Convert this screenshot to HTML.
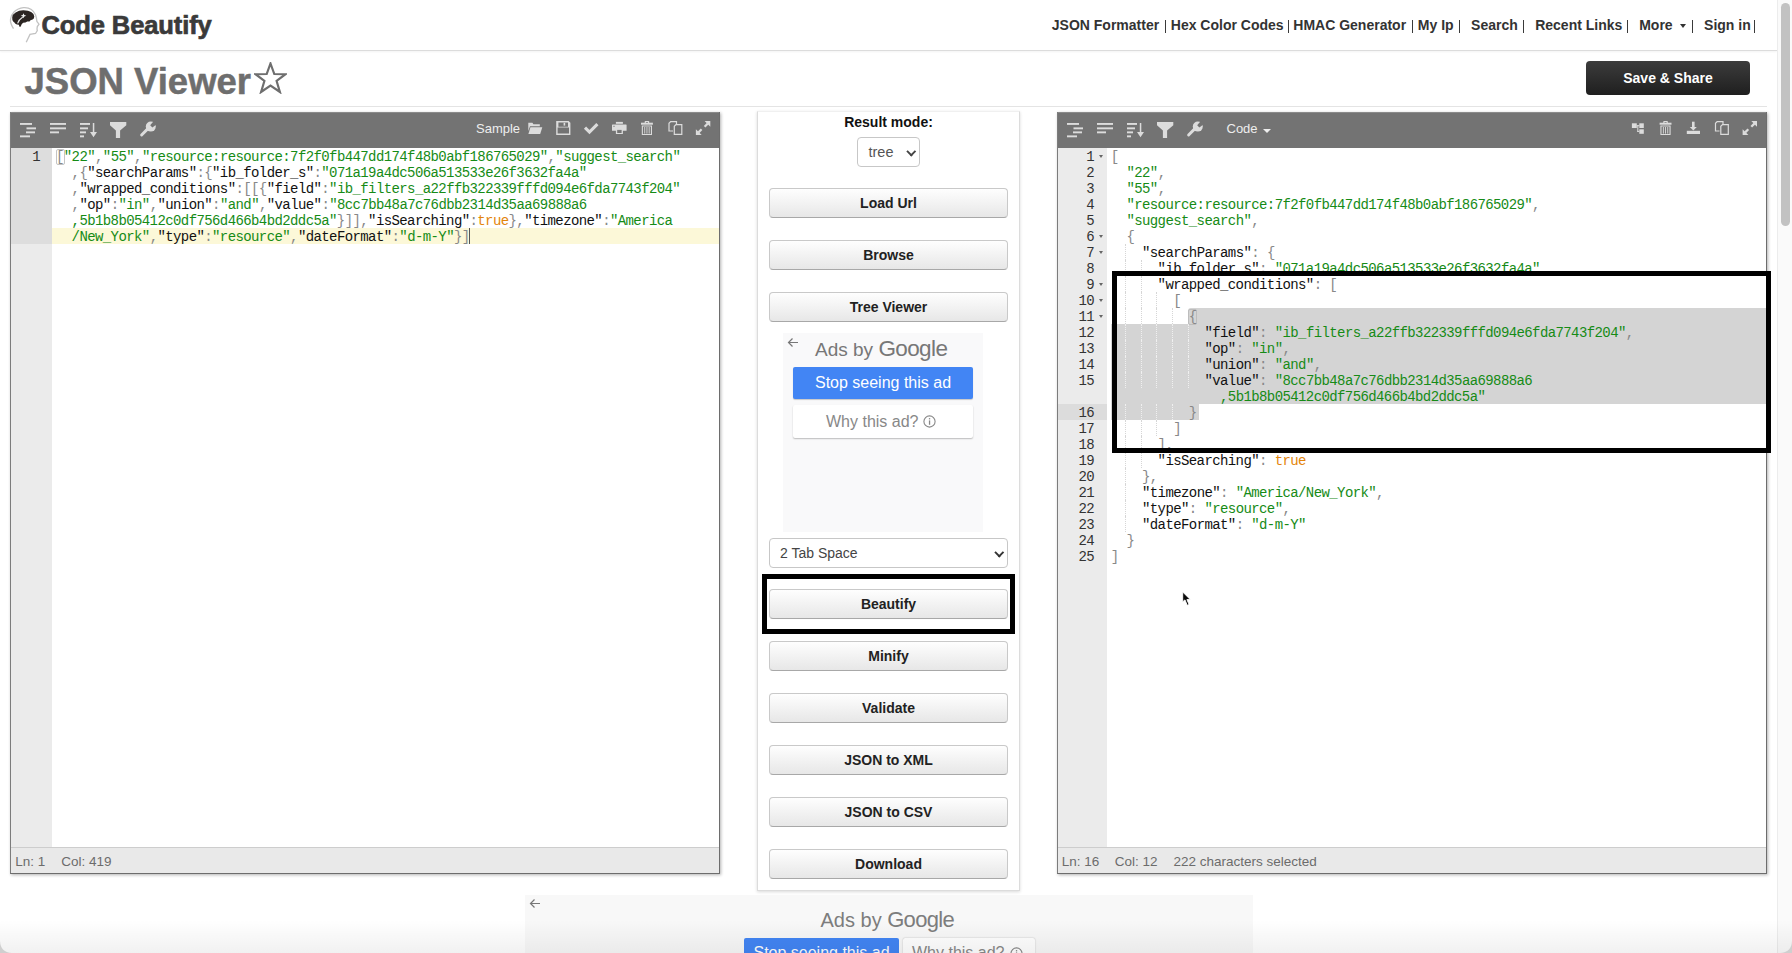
<!DOCTYPE html><html><head><meta charset="utf-8"><style>
*{box-sizing:border-box;margin:0;padding:0}
html,body{width:1792px;height:953px;overflow:hidden;background:#fff;font-family:"Liberation Sans",sans-serif}
.abs{position:absolute}
#hdr{position:absolute;left:0;top:0;width:1777px;height:51px;border-bottom:1px solid #dcdcdc;box-shadow:0 1px 2px rgba(0,0,0,.05)}
#logo-t{position:absolute;left:41.5px;top:10.5px;font-size:25.5px;font-weight:bold;color:#3a3a3a;letter-spacing:-0.1px;-webkit-text-stroke:0.7px #3a3a3a}
.nv{position:absolute;top:17px;font-size:14px;font-weight:bold;color:#333;white-space:nowrap}
.pp{position:absolute;top:19.5px;width:1.3px;height:13px;background:#3a3a3a}
#title{position:absolute;left:24.5px;top:61px;font-size:36.5px;font-weight:bold;color:#6e6e6e;-webkit-text-stroke:0.5px #6e6e6e;letter-spacing:0px}
#hr{position:absolute;left:10px;top:106px;width:1757px;height:1px;background:#e4e4e4}
#save{position:absolute;left:1586px;top:61px;width:164px;height:34px;border-radius:4px;background:linear-gradient(#3c3c3c,#1f1f1f);color:#fff;font-size:14px;font-weight:bold;text-align:center;line-height:34px}
.ed{position:absolute;top:112px;width:710px;height:762px;border:1px solid #6d6d6d;border-top:none;border-left-color:#7c7c7c;box-shadow:1px 1px 3px rgba(0,0,0,.3);background:#fff;overflow:hidden}
.tb{position:absolute;left:0;top:0;right:0;height:36px;background:#737373;border-top:1px solid #8a8a8a}
.gut{position:absolute;left:0;top:36px;bottom:26px;background:#ebebeb}
.gnum{position:absolute;font-family:"Liberation Mono",monospace;font-size:14px;letter-spacing:-0.6px;line-height:16px;text-align:right;color:#333}
.fold{position:absolute;width:0;height:0;border-left:2.5px solid transparent;border-right:2.5px solid transparent;border-top:3px solid #666}
.ig{position:absolute;width:0;height:16px;border-left:1px dotted #dadada}
.stat{position:absolute;left:0;right:0;bottom:0;height:26px;background:#e9e9e9;border-top:1px solid #cdcdcd}
.st{position:absolute;top:5.6px;font-size:13.5px;color:#6c6c6c;white-space:nowrap}
.code{position:absolute;font-family:"Liberation Mono",monospace;font-size:14px;letter-spacing:-0.6px;line-height:16px;white-space:pre;color:#000}
.k{color:#111}
.s{color:#168b16}
.p{color:#888}
.b{color:#e3850b}
.ic{position:absolute;fill:#dcdcdc;color:#dcdcdc;overflow:visible}
.tbt{position:absolute;top:120.5px;font-size:13px;color:#eee}
#mid{position:absolute;left:757px;top:111px;width:263px;height:780px;border:1px solid #dcdcdc;border-top-color:#f0f0f0;box-shadow:0 1px 3px rgba(0,0,0,.15);background:#fff}
.btn{position:absolute;left:769px;width:239px;height:29.5px;border:1px solid #c9c9c9;border-bottom-color:#a8a8a8;border-radius:4px;background:linear-gradient(#fefefe,#e7e7e7);font-size:14px;font-weight:bold;color:#222;text-align:center;line-height:29.5px}
.sel{position:absolute;border:1px solid #c7c7c7;border-radius:4px;background:#fff;font-size:15px;color:#333}
.chev{position:absolute;width:7px;height:7px;border-right:2px solid #333;border-bottom:2px solid #333;transform:rotate(45deg)}
.hl{position:absolute;border:5px solid #000}
</style></head><body>
<div id="hdr">
<svg class="abs" style="left:0;top:0" width="45" height="48" viewBox="0 0 45 48"><path d="M13.5 28.6 C11.5 25.5 10.2 22.5 10.5 19.5 C11 14 15.5 8.5 23.5 7.6 C29 7.2 33.5 10 35.6 15 C36.5 17.5 36.7 19.5 36.9 21.5 L39 24.2 L37.3 26.6 L37 28.9 L37.3 30.7 L35.5 33.5 L30 34.4 L26.2 42.3" fill="none" stroke="#c2c2c2" stroke-width="1.3"/><path d="M12.2 17.5 Q12.6 14.2 15.6 12.6 Q19 10.2 23.5 10.3 Q28.5 10.4 31.2 12 Q34.2 13.8 34.3 16.4 Q34.2 18.6 32.6 19.6 L30.5 20.2 L29.5 21.4 L27.2 21.6 L25.5 22.6 L23.2 22.8 L21.8 24 L20.8 26.2 Q20.1 27.4 19.4 26.5 L18.8 24.8 L17 24.6 L15.4 23.8 L14.4 22.4 L13.2 21.6 Q12 20 12.2 17.5 Z" fill="#2b2422"/><path d="M23.5 13.3 L24.3 15 L26.3 15.7 L24.3 16.4 L23.5 18.2 L22.7 16.4 L20.7 15.7 L22.7 15 Z" fill="#f2f2f2"/><path d="M22.8 17 C20.5 18.5 18.5 20.5 17.6 23.4" fill="none" stroke="#e6e6e6" stroke-width="1.1"/></svg>
<div id="logo-t">Code Beautify</div>
<div class="nv" style="left:1051.8px">JSON Formatter</div>
<div class="nv" style="left:1170.8px">Hex Color Codes</div>
<div class="nv" style="left:1293.3px">HMAC Generator</div>
<div class="nv" style="left:1417.8px">My Ip</div>
<div class="nv" style="left:1471.1px">Search</div>
<div class="nv" style="left:1535.2px">Recent Links</div>
<div class="nv" style="left:1639.2px">More</div>
<div class="nv" style="left:1704.1px">Sign in</div>
<div class="pp" style="left:1165.0px"></div>
<div class="pp" style="left:1288.1px"></div>
<div class="pp" style="left:1412.0px"></div>
<div class="pp" style="left:1458.7px"></div>
<div class="pp" style="left:1522.6px"></div>
<div class="pp" style="left:1626.6px"></div>
<div class="pp" style="left:1691.9px"></div>
<div class="pp" style="left:1753.9px"></div>
<div class="abs" style="left:1680.4px;top:24px;width:0;height:0;border-left:3.8px solid transparent;border-right:3.8px solid transparent;border-top:4px solid #333"></div>
</div>
<div id="title">JSON Viewer</div>
<svg class="abs" style="left:254px;top:62px" width="33" height="32" viewBox="0 0 33 32"><polygon points="16.5,1.5 20.3,12 31.5,12.2 22.6,19 25.9,30 16.5,23.6 7.1,30 10.4,19 1.5,12.2 12.7,12" fill="none" stroke="#6e6e6e" stroke-width="2.2" stroke-linejoin="miter"/></svg>
<div id="save">Save &amp; Share</div>
<div id="hr"></div>
<div class="ed" style="left:10px">
<div class="tb"></div>
<div class="gut" style="width:41px"></div>
<div class="abs" style="left:41px;top:116px;width:668px;height:16px;background:#fcf8d8"></div>
<div class="abs" style="left:0;top:36px;width:41px;height:96px;background:#dddddd"></div>
<div class="gnum" style="left:0;top:37px;width:29px">1</div>
<div class="code" style="left:45px;top:37px"><span class="p">[</span><span class="s">"22"</span><span class="p">,</span><span class="s">"55"</span><span class="p">,</span><span class="s">"resource:resource:7f2f0fb447dd174f48b0abf186765029"</span><span class="p">,</span><span class="s">"suggest_search"</span>
  <span class="p">,{</span><span class="k">"searchParams"</span><span class="p">:{</span><span class="k">"ib_folder_s"</span><span class="p">:</span><span class="s">"071a19a4dc506a513533e26f3632fa4a"</span>
  <span class="p">,</span><span class="k">"wrapped_conditions"</span><span class="p">:[[{</span><span class="k">"field"</span><span class="p">:</span><span class="s">"ib_filters_a22ffb322339fffd094e6fda7743f204"</span>
  <span class="p">,</span><span class="k">"op"</span><span class="p">:</span><span class="s">"in"</span><span class="p">,</span><span class="k">"union"</span><span class="p">:</span><span class="s">"and"</span><span class="p">,</span><span class="k">"value"</span><span class="p">:</span><span class="s">"8cc7bb48a7c76dbb2314d35aa69888a6</span>
  <span class="s">,5b1b8b05412c0df756d466b4bd2ddc5a"</span><span class="p">}]],</span><span class="k">"isSearching"</span><span class="p">:</span><span class="b">true</span><span class="p">},</span><span class="k">"timezone"</span><span class="p">:</span><span class="s">"America</span>
  <span class="s">/New_York"</span><span class="p">,</span><span class="k">"type"</span><span class="p">:</span><span class="s">"resource"</span><span class="p">,</span><span class="k">"dateFormat"</span><span class="p">:</span><span class="s">"d-m-Y"</span><span class="p">}]</span></div>
<div class="abs" style="left:44.6px;top:36.5px;width:9px;height:16px;border:1px solid #c4c4c4;border-radius:2px"></div>
<div class="abs" style="left:458.4px;top:116px;width:1px;height:16px;background:#555"></div>
<div class="stat"><span class="st" style="left:4.2px">Ln: 1</span><span class="st" style="left:50.3px">Col: 419</span></div>
</div>
<div class="ed" style="left:1057px">
<div class="tb"></div>
<div class="gut" style="width:49px"></div>
<div class="abs" style="left:0;top:292px;width:49px;height:16px;background:#dcdcdc"></div>
<div class="abs" style="left:129.8px;top:196px;right:0;height:16px;background:#d4d4d4;border-radius:3px 0 0 0"></div>
<div class="abs" style="left:52.8px;top:212px;right:0;height:80px;background:#d4d4d4"></div>
<div class="abs" style="left:52.8px;top:292px;width:87.8px;height:16px;background:#d4d4d4;border-radius:0"></div>
<div class="ig" style="left:67.2px;top:132px;border-left-color:#d6d6d6"></div><div class="ig" style="left:67.2px;top:148px;border-left-color:#d6d6d6"></div><div class="ig" style="left:82.8px;top:148px;border-left-color:#d6d6d6"></div><div class="ig" style="left:67.2px;top:164px;border-left-color:#d6d6d6"></div><div class="ig" style="left:82.8px;top:164px;border-left-color:#d6d6d6"></div><div class="ig" style="left:67.2px;top:180px;border-left-color:#d6d6d6"></div><div class="ig" style="left:82.8px;top:180px;border-left-color:#d6d6d6"></div><div class="ig" style="left:98.4px;top:180px;border-left-color:#d6d6d6"></div><div class="ig" style="left:67.2px;top:196px;border-left-color:#d6d6d6"></div><div class="ig" style="left:82.8px;top:196px;border-left-color:#d6d6d6"></div><div class="ig" style="left:98.4px;top:196px;border-left-color:#d6d6d6"></div><div class="ig" style="left:114.0px;top:196px;border-left-color:#d6d6d6"></div><div class="ig" style="left:67.2px;top:212px;border-left-color:#f0f0f0"></div><div class="ig" style="left:82.8px;top:212px;border-left-color:#f0f0f0"></div><div class="ig" style="left:98.4px;top:212px;border-left-color:#f0f0f0"></div><div class="ig" style="left:114.0px;top:212px;border-left-color:#f0f0f0"></div><div class="ig" style="left:129.6px;top:212px;border-left-color:#f0f0f0"></div><div class="ig" style="left:67.2px;top:228px;border-left-color:#f0f0f0"></div><div class="ig" style="left:82.8px;top:228px;border-left-color:#f0f0f0"></div><div class="ig" style="left:98.4px;top:228px;border-left-color:#f0f0f0"></div><div class="ig" style="left:114.0px;top:228px;border-left-color:#f0f0f0"></div><div class="ig" style="left:129.6px;top:228px;border-left-color:#f0f0f0"></div><div class="ig" style="left:67.2px;top:244px;border-left-color:#f0f0f0"></div><div class="ig" style="left:82.8px;top:244px;border-left-color:#f0f0f0"></div><div class="ig" style="left:98.4px;top:244px;border-left-color:#f0f0f0"></div><div class="ig" style="left:114.0px;top:244px;border-left-color:#f0f0f0"></div><div class="ig" style="left:129.6px;top:244px;border-left-color:#f0f0f0"></div><div class="ig" style="left:67.2px;top:260px;border-left-color:#f0f0f0"></div><div class="ig" style="left:82.8px;top:260px;border-left-color:#f0f0f0"></div><div class="ig" style="left:98.4px;top:260px;border-left-color:#f0f0f0"></div><div class="ig" style="left:114.0px;top:260px;border-left-color:#f0f0f0"></div><div class="ig" style="left:129.6px;top:260px;border-left-color:#f0f0f0"></div><div class="ig" style="left:67.2px;top:292px;border-left-color:#f0f0f0"></div><div class="ig" style="left:82.8px;top:292px;border-left-color:#f0f0f0"></div><div class="ig" style="left:98.4px;top:292px;border-left-color:#f0f0f0"></div><div class="ig" style="left:114.0px;top:292px;border-left-color:#f0f0f0"></div><div class="ig" style="left:67.2px;top:308px;border-left-color:#d6d6d6"></div><div class="ig" style="left:82.8px;top:308px;border-left-color:#d6d6d6"></div><div class="ig" style="left:98.4px;top:308px;border-left-color:#d6d6d6"></div><div class="ig" style="left:67.2px;top:324px;border-left-color:#d6d6d6"></div><div class="ig" style="left:82.8px;top:324px;border-left-color:#d6d6d6"></div><div class="ig" style="left:67.2px;top:340px;border-left-color:#d6d6d6"></div><div class="ig" style="left:82.8px;top:340px;border-left-color:#d6d6d6"></div><div class="ig" style="left:67.2px;top:356px;border-left-color:#d6d6d6"></div><div class="ig" style="left:67.2px;top:372px;border-left-color:#d6d6d6"></div><div class="ig" style="left:67.2px;top:388px;border-left-color:#d6d6d6"></div><div class="ig" style="left:67.2px;top:404px;border-left-color:#d6d6d6"></div>
<div class="abs" style="left:130.3px;top:196.5px;width:9px;height:16px;border:1px solid #bdbdbd;border-radius:2px"></div>
<div class="gnum" style="left:0;top:37px;width:36px">1</div><div class="fold" style="left:40.5px;top:43px"></div><div class="gnum" style="left:0;top:53px;width:36px">2</div><div class="gnum" style="left:0;top:69px;width:36px">3</div><div class="gnum" style="left:0;top:85px;width:36px">4</div><div class="gnum" style="left:0;top:101px;width:36px">5</div><div class="gnum" style="left:0;top:117px;width:36px">6</div><div class="fold" style="left:40.5px;top:123px"></div><div class="gnum" style="left:0;top:133px;width:36px">7</div><div class="fold" style="left:40.5px;top:139px"></div><div class="gnum" style="left:0;top:149px;width:36px">8</div><div class="gnum" style="left:0;top:165px;width:36px">9</div><div class="fold" style="left:40.5px;top:171px"></div><div class="gnum" style="left:0;top:181px;width:36px">10</div><div class="fold" style="left:40.5px;top:187px"></div><div class="gnum" style="left:0;top:197px;width:36px">11</div><div class="fold" style="left:40.5px;top:203px"></div><div class="gnum" style="left:0;top:213px;width:36px">12</div><div class="gnum" style="left:0;top:229px;width:36px">13</div><div class="gnum" style="left:0;top:245px;width:36px">14</div><div class="gnum" style="left:0;top:261px;width:36px">15</div><div class="gnum" style="left:0;top:293px;width:36px">16</div><div class="gnum" style="left:0;top:309px;width:36px">17</div><div class="gnum" style="left:0;top:325px;width:36px">18</div><div class="gnum" style="left:0;top:341px;width:36px">19</div><div class="gnum" style="left:0;top:357px;width:36px">20</div><div class="gnum" style="left:0;top:373px;width:36px">21</div><div class="gnum" style="left:0;top:389px;width:36px">22</div><div class="gnum" style="left:0;top:405px;width:36px">23</div><div class="gnum" style="left:0;top:421px;width:36px">24</div><div class="gnum" style="left:0;top:437px;width:36px">25</div>
<div class="code" style="left:52.8px;top:37px"><span class="p">[</span>
  <span class="s">"22"</span><span class="p">,</span>
  <span class="s">"55"</span><span class="p">,</span>
  <span class="s">"resource:resource:7f2f0fb447dd174f48b0abf186765029"</span><span class="p">,</span>
  <span class="s">"suggest_search"</span><span class="p">,</span>
  <span class="p">{</span>
    <span class="k">"searchParams"</span><span class="p">:</span> <span class="p">{</span>
      <span class="k">"ib_folder_s"</span><span class="p">:</span> <span class="s">"071a19a4dc506a513533e26f3632fa4a"</span><span class="p">,</span>
      <span class="k">"wrapped_conditions"</span><span class="p">:</span> <span class="p">[</span>
        <span class="p">[</span>
          <span class="p">{</span>
            <span class="k">"field"</span><span class="p">:</span> <span class="s">"ib_filters_a22ffb322339fffd094e6fda7743f204"</span><span class="p">,</span>
            <span class="k">"op"</span><span class="p">:</span> <span class="s">"in"</span><span class="p">,</span>
            <span class="k">"union"</span><span class="p">:</span> <span class="s">"and"</span><span class="p">,</span>
            <span class="k">"value"</span><span class="p">:</span> <span class="s">"8cc7bb48a7c76dbb2314d35aa69888a6</span>
              <span class="s">,5b1b8b05412c0df756d466b4bd2ddc5a"</span>
          <span class="p">}</span>
        <span class="p">]</span>
      <span class="p">],</span>
      <span class="k">"isSearching"</span><span class="p">:</span> <span class="b">true</span>
    <span class="p">},</span>
    <span class="k">"timezone"</span><span class="p">:</span> <span class="s">"America/New_York"</span><span class="p">,</span>
    <span class="k">"type"</span><span class="p">:</span> <span class="s">"resource"</span><span class="p">,</span>
    <span class="k">"dateFormat"</span><span class="p">:</span> <span class="s">"d-m-Y"</span>
  <span class="p">}</span>
<span class="p">]</span></div>
<div class="stat"><span class="st" style="left:3.8px">Ln: 16</span><span class="st" style="left:56.7px">Col: 12</span><span class="st" style="left:115.4px">222 characters selected</span></div>
</div>
<svg class="abs" style="left:0;top:0;overflow:visible" width="1792" height="160" viewBox="0 0 1792 160" fill="#dcdcdc"><rect x="20" y="123" width="12" height="1.9"/><rect x="26.5" y="127.4" width="9.5" height="1.9"/><rect x="26" y="131.4" width="9" height="1.9"/><rect x="20" y="135.4" width="10" height="1.9"/><rect x="50" y="123" width="16" height="1.9"/><rect x="50" y="127.4" width="16" height="1.9"/><rect x="50" y="131.4" width="9" height="1.9"/><rect x="80" y="123" width="10" height="1.9"/><rect x="80" y="127.4" width="8" height="1.9"/><rect x="80" y="131.4" width="6" height="1.9"/><rect x="80" y="135.4" width="4" height="1.9"/><rect x="92.8" y="123" width="1.5" height="10"/><polygon points="90,132 97,132 93.5,137.2"/><polygon points="110,122 126.3,122 126.3,125.2 120.1,130.4 120.1,137.9 115.9,137.9 115.9,130.4 110,125.2"/><path d="M141.6 135 L148.2 128.4" stroke="#dcdcdc" stroke-width="2.9" stroke-linecap="round" fill="none"/><circle cx="150.8" cy="126.6" r="5"/><path d="M150.2 125.2 L153.8 121.0 L157.4 123.8 L152.4 127.6 Z" fill="#737373"/><rect x="1067" y="123" width="12" height="1.9"/><rect x="1073.5" y="127.4" width="9.5" height="1.9"/><rect x="1073" y="131.4" width="9" height="1.9"/><rect x="1067" y="135.4" width="10" height="1.9"/><rect x="1097" y="123" width="16" height="1.9"/><rect x="1097" y="127.4" width="16" height="1.9"/><rect x="1097" y="131.4" width="9" height="1.9"/><rect x="1127" y="123" width="10" height="1.9"/><rect x="1127" y="127.4" width="8" height="1.9"/><rect x="1127" y="131.4" width="6" height="1.9"/><rect x="1127" y="135.4" width="4" height="1.9"/><rect x="1139.8" y="123" width="1.5" height="10"/><polygon points="1137,132 1144,132 1140.5,137.2"/><polygon points="1157,122 1173.3,122 1173.3,125.2 1167.1,130.4 1167.1,137.9 1162.9,137.9 1162.9,130.4 1157,125.2"/><path d="M1188.6 135 L1195.2 128.4" stroke="#dcdcdc" stroke-width="2.9" stroke-linecap="round" fill="none"/><circle cx="1197.8" cy="126.6" r="5"/><path d="M1197.2 125.2 L1200.8 121.0 L1204.4 123.8 L1199.4 127.6 Z" fill="#737373"/><polygon points="528.3,122.8 532.4,122.8 533.4,124.2 539.8,124.2 539.8,126.3 530,126.3 528.3,131"/><polygon points="530.4,127.3 542.3,127.3 540.2,134 528.4,134"/><path d="M556.2 121 H568.6 L570.4 122.8 V134.9 H556.2 Z M557.6 127.4 V133.5 H569 V127.4 Z" fill-rule="evenodd"/><path d="M558.4 122.4 V126.8 H568 V122.6 L567.4 122.4 Z" fill="#737373"/><rect x="563.6" y="122.8" width="1.6" height="2.8"/><path d="M585 127.6 L589.5 132.1 L597.4 124.2" stroke="#dcdcdc" stroke-width="3.1" fill="none" stroke-linejoin="miter"/><rect x="615.9" y="121.9" width="7" height="1.9"/><path d="M612.6 124.4 H626 Q626.6 124.4 626.6 125 V130.7 H612 V125 Q612 124.4 612.6 124.4 Z"/><path d="M615.9 128.9 H622.9 V134.1 H615.9 Z M617.2 129.9 V133 H621.6 V129.9 Z" fill-rule="evenodd"/><rect x="617.2" y="129.9" width="4.4" height="1" fill="#737373"/><rect x="613.4" y="125.8" width="1.2" height="1" fill="#737373"/><path d="M644.7 123 V121.6 Q644.7 121 645.3 121 H648.6 Q649.2 121 649.2 121.6 V123 H648 V122.1 H645.9 V123 Z"/><rect x="641" y="122.7" width="11.9" height="2"/><path d="M641.8 125.5 H652 V135 H641.8 Z M642.9 126.5 V134 H650.9 V126.5 Z" fill-rule="evenodd"/><rect x="644.3" y="127" width="0.9" height="6.6"/><rect x="646.5" y="127" width="0.9" height="6.6"/><rect x="648.7" y="127" width="0.9" height="6.6"/><path d="M1663.3000000000002 123 V121.6 Q1663.3000000000002 121 1663.9 121 H1667.2 Q1667.8000000000002 121 1667.8000000000002 121.6 V123 H1666.6 V122.1 H1664.5 V123 Z"/><rect x="1659.6" y="122.7" width="11.9" height="2"/><path d="M1660.4 125.5 H1670.6 V135 H1660.4 Z M1661.5 126.5 V134 H1669.5 V126.5 Z" fill-rule="evenodd"/><rect x="1662.9" y="127" width="0.9" height="6.6"/><rect x="1665.1" y="127" width="0.9" height="6.6"/><rect x="1667.3000000000002" y="127" width="0.9" height="6.6"/><path d="M668.4000000000001 123 L670.4000000000001 121 H677.0999999999999 V124.3 H675.9000000000001 V122.2 H670.9000000000001 L669.5999999999999 123.5 V130.4 H673.0 V131.6 H668.4000000000001 Z"/><path d="M673.7 126 L675.7 124 H682.4000000000001 V134.9 H673.7 Z M674.9000000000001 126.5 V133.7 H681.2 V125.2 H676.2 Z" fill-rule="evenodd"/><path d="M1714.9 123 L1716.9 121 H1723.6 V124.3 H1722.4 V122.2 H1717.4 L1716.1 123.5 V130.4 H1719.5 V131.6 H1714.9 Z"/><path d="M1720.2 126 L1722.2 124 H1728.9 V134.9 H1720.2 Z M1721.4 126.5 V133.7 H1727.7 V125.2 H1722.7 Z" fill-rule="evenodd"/><polygon points="704.5999999999999,121 710.3,121 710.3,126.7"/><path d="M707.7 123.6 L704.5999999999999 126.7" stroke="#dcdcdc" stroke-width="2.2" fill="none"/><polygon points="695.8999999999999,129.2 695.8999999999999,135 701.7,135"/><path d="M698.5 132.4 L701.5999999999999 129.3" stroke="#dcdcdc" stroke-width="2.2" fill="none"/><polygon points="1751.3,121 1757.0,121 1757.0,126.7"/><path d="M1754.4 123.6 L1751.3 126.7" stroke="#dcdcdc" stroke-width="2.2" fill="none"/><polygon points="1742.6,129.2 1742.6,135 1748.4,135"/><path d="M1745.2 132.4 L1748.3 129.3" stroke="#dcdcdc" stroke-width="2.2" fill="none"/><rect x="1631.9" y="123.3" width="4.9" height="4.7"/><rect x="1639.3" y="123.3" width="4.5" height="4.7"/><rect x="1639.3" y="129.3" width="4.5" height="4.5"/><rect x="1636.8" y="125.2" width="2.5" height="1"/><rect x="1637.3" y="125.2" width="1" height="6.7"/><rect x="1637.3" y="130.9" width="2" height="1"/><rect x="1692" y="121.7" width="2.6" height="5.8"/><polygon points="1689.8,127 1696.8,127 1693.3,130.6"/><rect x="1686.8" y="130.8" width="13.2" height="3.2"/></svg>
<div class="tbt" style="left:476px">Sample</div>
<div class="tbt" style="left:1226.5px">Code</div>
<div class="abs" style="left:1262.5px;top:128.5px;width:0;height:0;border-left:4px solid transparent;border-right:4px solid transparent;border-top:4.5px solid #eee"></div>
<div id="mid"></div>
<div class="abs" style="left:757px;top:114px;width:263px;text-align:center;font-size:14px;font-weight:bold;color:#111">Result mode:</div>
<div class="sel" style="left:857px;top:137px;width:63px;height:30px"><span class="abs" style="left:10.5px;top:5.5px;color:#555;font-size:14.5px">tree</span><div class="chev" style="left:50px;top:9.5px;width:6.5px;height:6.5px;border-width:0 2.2px 2.2px 0;border-color:#444"></div></div>
<div class="btn" style="top:188.3px">Load Url</div>
<div class="btn" style="top:240.3px">Browse</div>
<div class="btn" style="top:292.3px">Tree Viewer</div>
<div class="btn" style="top:589.2px">Beautify</div>
<div class="btn" style="top:641.2px">Minify</div>
<div class="btn" style="top:693.2px">Validate</div>
<div class="btn" style="top:745.2px">JSON to XML</div>
<div class="btn" style="top:797.2px">JSON to CSV</div>
<div class="btn" style="top:849.2px">Download</div>
<div class="abs" style="left:783px;top:333px;width:200px;height:199px;background:#f9f9fa"></div>
<svg class="abs" style="left:787px;top:337px" width="12" height="11" viewBox="0 0 12 11"><path d="M11 5.5 H1.5 M5.5 1.5 L1.5 5.5 L5.5 9.5" fill="none" stroke="#777" stroke-width="1.2"/></svg>
<div class="abs" style="left:815px;top:336px;font-size:19px;color:#777;white-space:nowrap">Ads by <span style="font-size:22.5px;letter-spacing:-0.6px">Google</span></div>
<div class="abs" style="left:793px;top:367px;width:180px;height:32px;background:#4285f4;border-radius:2px;box-shadow:0 1px 1px rgba(0,0,0,.2);color:#fff;font-size:16px;text-align:center;line-height:32px">Stop seeing this ad</div>
<div class="abs" style="left:793px;top:405px;width:180px;height:33px;background:#fff;border-radius:2px;box-shadow:0 1px 1.5px rgba(0,0,0,.25);color:#888;font-size:16px;line-height:33px;white-space:nowrap"><span class="abs" style="left:33px">Why this ad?</span><svg class="abs" style="left:130px;top:10px" width="13" height="13" viewBox="0 0 13 13"><circle cx="6.5" cy="6.5" r="5.6" fill="none" stroke="#888" stroke-width="1.1"/><rect x="5.9" y="5.4" width="1.3" height="4.4" fill="#888"/><rect x="5.9" y="3.1" width="1.3" height="1.3" fill="#888"/></svg></div>
<div class="sel" style="left:769px;top:538px;width:239px;height:30px"><span class="abs" style="left:10px;top:6px;font-size:14px;color:#444">2 Tab Space</span><div class="chev" style="left:225.5px;top:9.5px;width:6.5px;height:6.5px;border-width:0 2.2px 2.2px 0;border-color:#333"></div></div>
<div class="hl" style="left:762px;top:574px;width:253px;height:60px"></div>
<div class="hl" style="left:1112px;top:271px;width:659px;height:182px"></div>
<div class="abs" style="left:525px;top:895px;width:728px;height:58px;background:#f8f8f8"></div>
<svg class="abs" style="left:529px;top:898px" width="12" height="11" viewBox="0 0 12 11"><path d="M11 5.5 H1.5 M5.5 1.5 L1.5 5.5 L5.5 9.5" fill="none" stroke="#777" stroke-width="1.2"/></svg>
<div class="abs" style="left:820.5px;top:907px;font-size:20px;color:#7d7d7d;white-space:nowrap">Ads by <span style="font-size:22px;letter-spacing:-0.7px">Google</span></div>
<div class="abs" style="left:744px;top:938px;width:155px;height:30px;background:#4285f4;border-radius:2px;color:#fff;font-size:16px;text-align:center;line-height:30px">Stop seeing this ad</div>
<div class="abs" style="left:903px;top:938px;width:132px;height:30px;background:#fff;border-radius:2px;box-shadow:0 0 1.5px rgba(0,0,0,.3);color:#888;font-size:16px;line-height:30px;padding-left:9px">Why this ad?<svg class="abs" style="left:107px;top:9px" width="13" height="13" viewBox="0 0 13 13"><circle cx="6.5" cy="6.5" r="5.6" fill="none" stroke="#888" stroke-width="1.1"/><rect x="5.9" y="5.4" width="1.3" height="4.4" fill="#888"/><rect x="5.9" y="3.1" width="1.3" height="1.3" fill="#888"/></svg></div>
<svg class="abs" style="left:1180px;top:590px" width="14" height="20" viewBox="0 0 14 20"><path d="M2.7 2 L2.7 11.8 L5 9.9 L7.2 15.3 L9.1 14.5 L6.9 9.6 L10.3 9.6 Z" fill="#0a0a0a" stroke="#fff" stroke-width="0.9" stroke-linejoin="round"/></svg>
<div class="abs" style="left:1777px;top:0;width:15px;height:953px;background:#fafafa;border-left:1px solid #ececec"></div>
<div class="abs" style="left:1780.5px;top:3px;width:9px;height:223px;background:#c2c2c2;border-radius:5px"></div>
<div class="abs" style="left:0;top:920px;width:1792px;height:33px;background:linear-gradient(rgba(0,0,0,0),rgba(0,0,0,.055));pointer-events:none"></div>
<svg class="abs" style="left:0;top:941px" width="12" height="12" viewBox="0 0 12 12"><path d="M0 0 Q0.5 11.5 12 12 L0 12 Z" fill="#cfcfcf"/></svg>
<svg class="abs" style="left:1780px;top:941px" width="12" height="12" viewBox="0 0 12 12"><path d="M12 0 Q11.5 11.5 0 12 L12 12 Z" fill="#cfcfcf"/></svg>
</body></html>
